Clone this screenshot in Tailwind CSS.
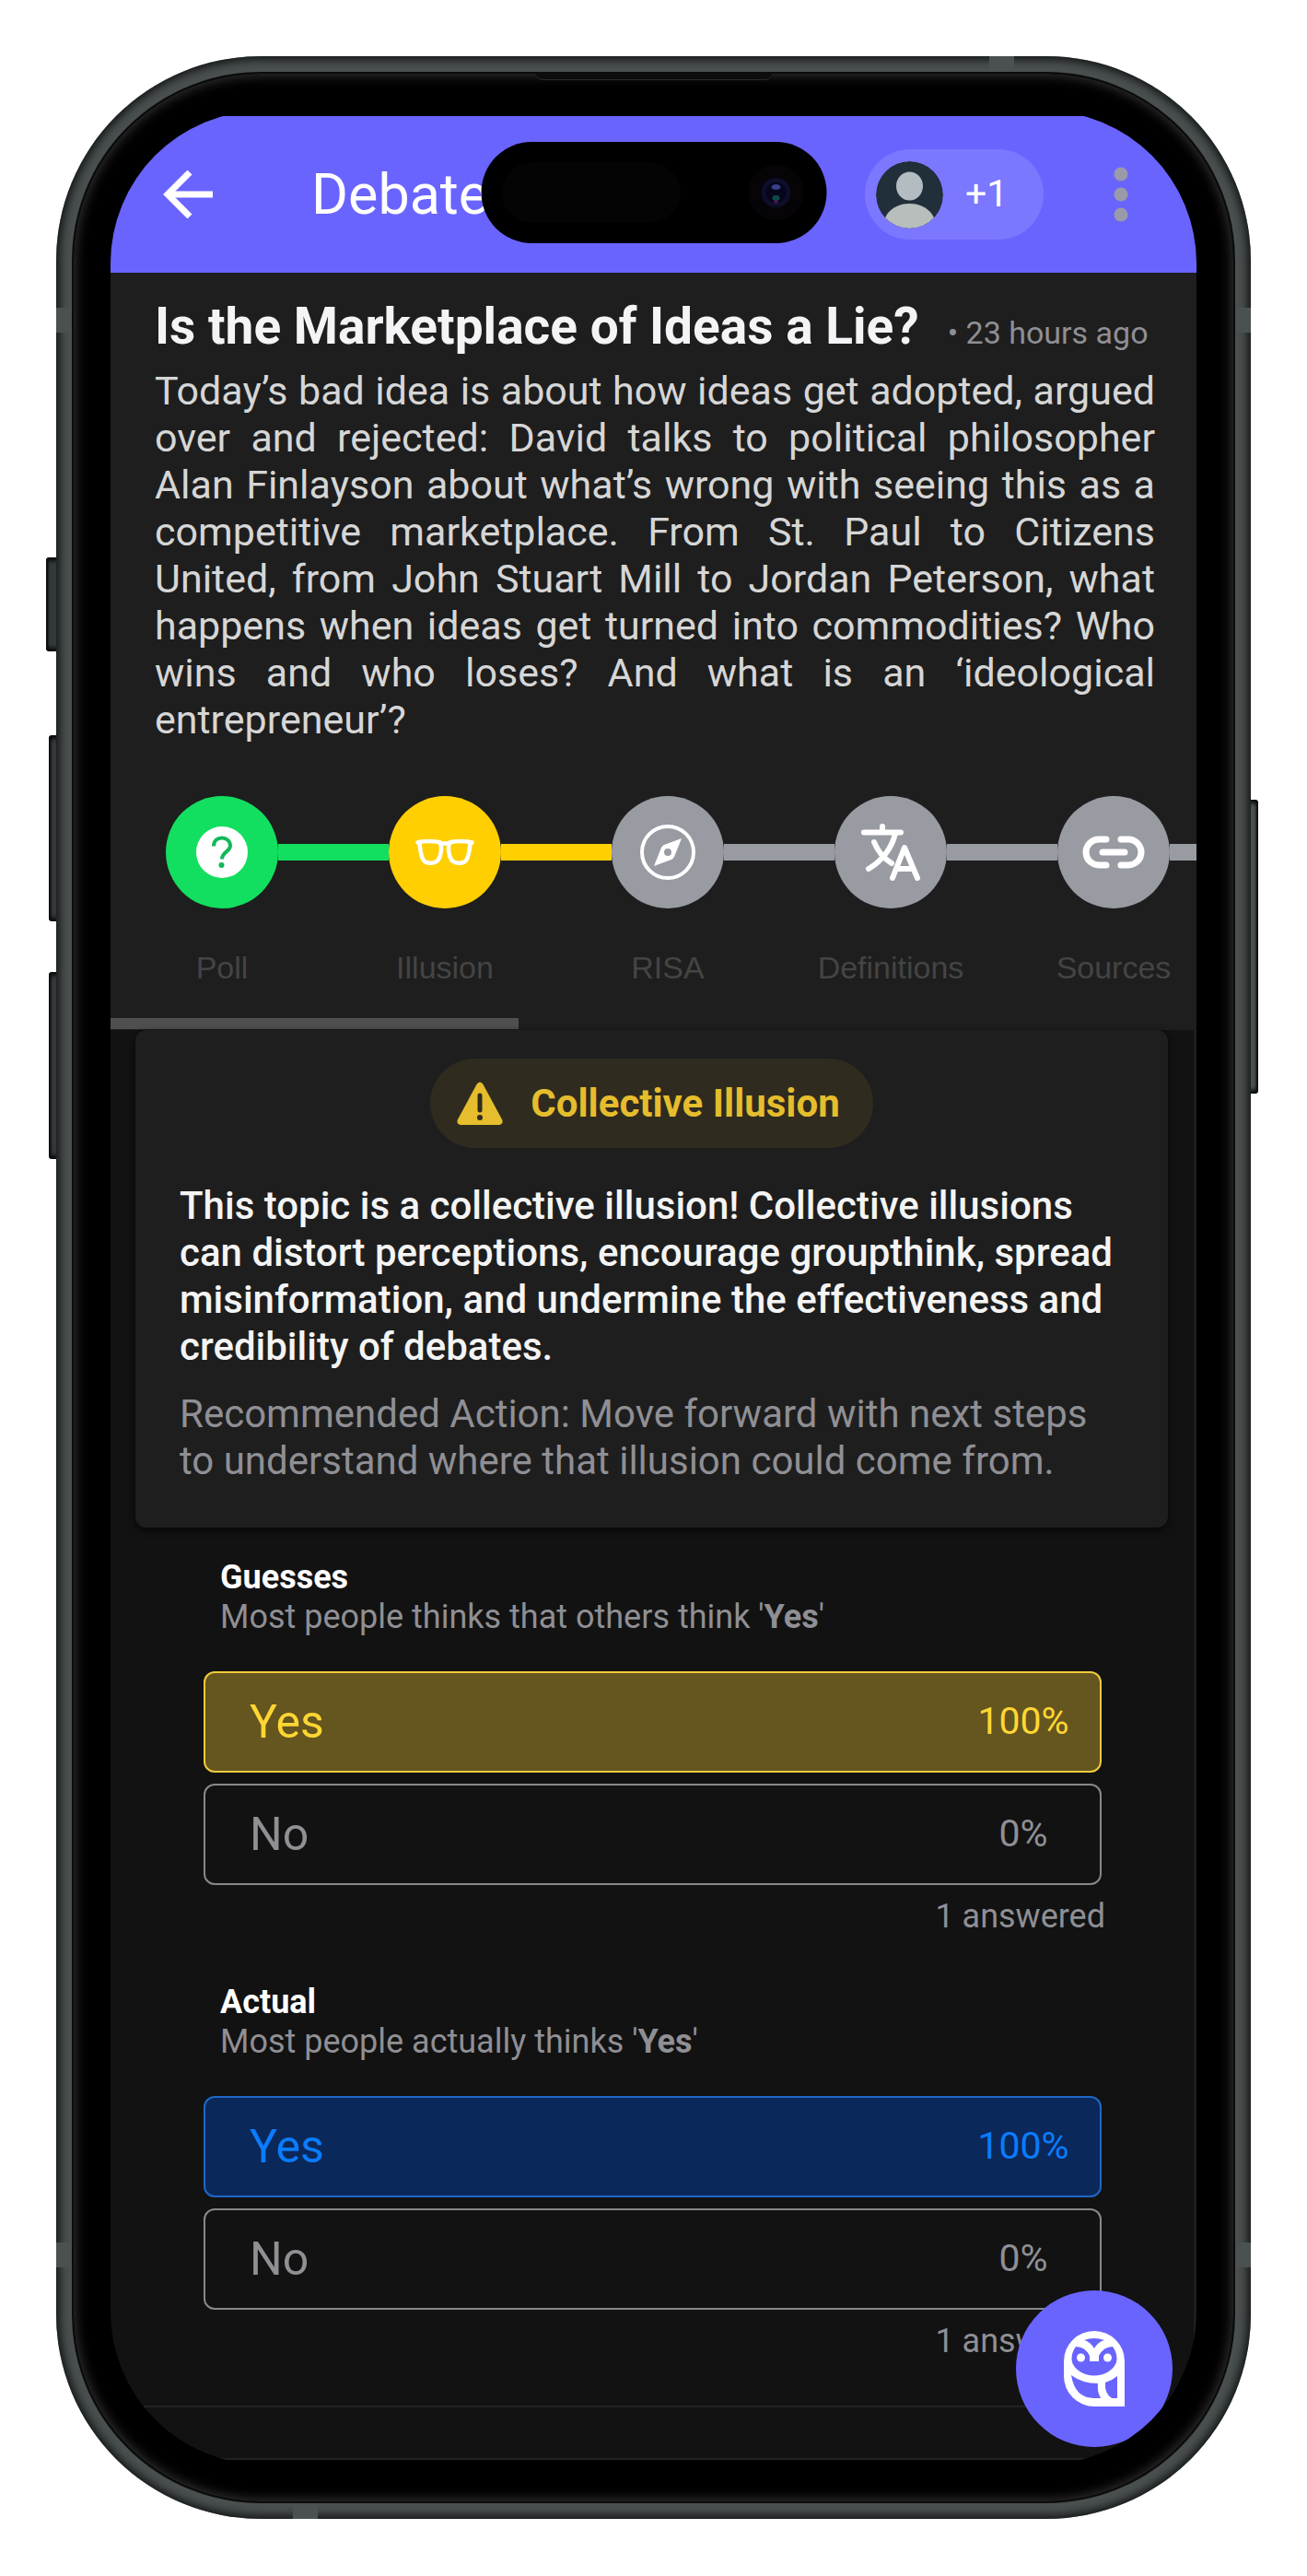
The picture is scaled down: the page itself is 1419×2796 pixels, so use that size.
<!DOCTYPE html>
<html lang="en">
<head>
<meta charset="utf-8">
<meta name="viewport" content="width=device-width, initial-scale=1">
<title>Debate</title>
<script src="https://cdn.jsdelivr.net/npm/@tailwindcss/browser@4"></script>
</head>
<body class="bg-white font-['Roboto',sans-serif]">
<div class="relative mx-[61px] my-[61px]">
  <!-- side buttons -->
  <span class="absolute -left-[11px] top-[544px] h-[102px] w-4 rounded-l bg-[#33383a] shadow-[inset_2px_0_2px_#0c0e0e,inset_0_4px_4px_#0c0e0e,inset_0_-4px_4px_#0c0e0e]"></span>
  <span class="absolute -left-2 top-[737px] h-[202px] w-4 rounded-l bg-[#33383a] shadow-[inset_2px_0_2px_#0c0e0e,inset_0_4px_4px_#0c0e0e,inset_0_-4px_4px_#0c0e0e]"></span>
  <span class="absolute -left-2 top-[994px] h-[203px] w-4 rounded-l bg-[#33383a] shadow-[inset_2px_0_2px_#0c0e0e,inset_0_4px_4px_#0c0e0e,inset_0_-4px_4px_#0c0e0e]"></span>
  <span class="absolute -right-2 top-[807px] h-[319px] w-4 rounded-r bg-[#4a4f50] shadow-[inset_-2px_0_2px_#0c0e0e,inset_0_4px_4px_#0c0e0e,inset_0_-4px_4px_#0c0e0e]"></span>

  <!-- metal frame -->
  <div class="relative overflow-hidden rounded-[222px] bg-[#4a4f50] p-[17px] shadow-[inset_0_0_10px_4px_#141717]">
    <span class="absolute right-[257px] top-0 h-[18px] w-[27px] bg-[#4b5051]"></span>
    <span class="absolute left-0 top-[273px] h-[27px] w-[18px] bg-[#4b5051]"></span>
    <span class="absolute right-0 top-[273px] h-[27px] w-[18px] bg-[#4b5051]"></span>
    <span class="absolute bottom-[273px] left-0 h-[27px] w-[18px] bg-[#4b5051]"></span>
    <span class="absolute bottom-[273px] right-0 h-[27px] w-[18px] bg-[#4b5051]"></span>
    <span class="absolute bottom-0 left-[257px] h-[18px] w-[27px] bg-[#4b5051]"></span>

    <!-- bezel -->
    <div class="relative rounded-[205px] border-2 border-[#0c0c0c] bg-black p-10 shadow-[inset_0_0_14px_1px_#3a3a3a]">
      <span class="absolute left-1/2 top-0 h-[7px] w-64 -translate-x-1/2 rounded-b-lg border-b border-[#2a2a2a] bg-[#0d0d0d]"></span>

      <!-- screen -->
      <div class="relative overflow-hidden rounded-[166px] bg-black pb-[5px] pt-[6px]">
        <header class="flex h-[170px] items-center bg-[#6a64ff]">
          <button type="button" aria-label="Back" class="ml-[57px] text-white">
            <svg class="h-[52px] w-[56px]" viewBox="0 0 56 52" fill="none" stroke="currentColor" stroke-width="7"><path d="M29 2 5 26 29 50"/><path d="M5 26H54"/></svg>
          </button>
          <h2 class="ml-[105px] text-[61px] leading-[72px] text-white">Debate</h2>
          <button type="button" class="ml-auto flex h-[98px] w-[194px] items-center gap-[24px] rounded-full bg-[#7c77ff] pl-3 text-[41px] text-white">
            <svg class="h-[73px] w-[73px] rounded-full" viewBox="0 0 73 73"><circle cx="36.500" cy="36.500" r="36.500" fill="#212f3a"/><ellipse cx="36.500" cy="27" rx="14.500" ry="15.500" fill="#b2bcc1"/><path d="M10 61.500C14 52 24 46 36.500 46S59 52 63 61.500A36.500 36.500 0 0 1 10 61.500Z" fill="#b8bebb"/></svg>
            <span>+1</span>
          </button>
          <button type="button" aria-label="More options" class="ml-[74px] mr-[72px]">
            <svg class="h-[60px] w-5" viewBox="0 0 20 60" fill="#9a9ba8"><circle cx="10" cy="8" r="7.500"/><circle cx="10" cy="30" r="7.500"/><circle cx="10" cy="52" r="7.500"/></svg>
          </button>
        </header>

        <!-- camera island -->
        <div class="absolute left-1/2 top-[34px] flex h-[110px] w-[375px] -translate-x-1/2 items-center justify-between rounded-full bg-black pl-[22px] pr-[25px]">
          <span class="h-[66px] w-[194px] rounded-full bg-[#040404]"></span>
          <svg class="h-[60px] w-[60px]" viewBox="0 0 60 60"><circle cx="30" cy="30" r="30" fill="#060407"/><circle cx="30" cy="30" r="16" fill="#0d0e2a"/><circle cx="30" cy="30" r="11" fill="#05061a"/><ellipse cx="30" cy="24" rx="5" ry="3" fill="#3b3f8c"/><ellipse cx="30" cy="36" rx="4" ry="3" fill="#0d4a4a"/><circle cx="30" cy="40" r="2" fill="#5a1450"/></svg>
        </div>

        <main class="bg-[#121212]">
          <section class="bg-[#1e1e1e] pt-7">
            <div class="pl-[48px] pr-[45px]">
              <div class="flex items-baseline gap-[31px] whitespace-nowrap">
                <h1 class="text-[55px] font-bold leading-[60px] text-[#f4f4f6]">Is the Marketplace of Ideas a Lie?</h1>
                <span class="text-[34px] leading-[40px] text-[#8f8f94]">• 23 hours ago</span>
              </div>
              <p class="mt-[15px] text-justify text-[43px] leading-[51px] text-[#d6d6d6]">Today’s bad idea is about how ideas get adopted, argued over and rejected: David talks to political philosopher Alan Finlayson about what’s wrong with seeing this as a competitive marketplace. From St. Paul to Citizens United, from John Stuart Mill to Jordan Peterson, what happens when ideas get turned into commodities? Who wins and who loses? And what is an ‘ideological entrepreneur’?</p>
            </div>

            <nav aria-label="Debate steps" class="mt-[57px] overflow-hidden">
              <ol class="flex font-['Liberation_Sans',sans-serif] text-[34px] leading-[40px] text-[#444444]">
                <li class="w-[242px] shrink-0">
                  <button type="button" class="flex w-full flex-col items-center gap-[44px]">
                    <span class="flex w-full items-center">
                      <span class="h-[18px] flex-1"></span>
                      <span class="flex size-[122px] items-center justify-center rounded-full bg-[#12df5f]">
                        <svg class="size-[56px]" viewBox="0 0 56 56"><circle cx="28" cy="28" r="28" fill="#fff"/><path d="M19 21.500C19 15.500 23 12.500 28 12.500S37 16 37 21C37 27.500 28 27.500 28 35.500" fill="none" stroke="#12b85a" stroke-width="4"/><circle cx="27.500" cy="42" r="3" fill="#12b85a"/></svg>
                      </span>
                      <span class="h-[18px] flex-1 bg-[#12df5f]"></span>
                    </span>
                    <span>Poll</span>
                  </button>
                </li>
                <li class="w-[242px] shrink-0">
                  <button type="button" class="flex w-full flex-col items-center gap-[44px]">
                    <span class="flex w-full items-center">
                      <span class="h-[18px] flex-1 bg-[#12df5f]"></span>
                      <span class="flex size-[122px] items-center justify-center rounded-full bg-[#ffcf02]">
                        <svg class="h-[28px] w-[64px]" viewBox="0 0 64 28" fill="none" stroke="#fff" stroke-width="4.500" stroke-linejoin="round" stroke-linecap="round"><path d="M2.500 3.500C9 1.500 20 1.500 27 3.500C29 9 28 17 25 22C22 26.500 12 27 9 23C5.500 18 5 9 4.500 4"/><path d="M61.500 3.500C55 1.500 44 1.500 37 3.500C35 9 36 17 39 22C42 26.500 52 27 55 23C58.500 18 59 9 59.500 4"/><path d="M27 4.500H37"/></svg>
                      </span>
                      <span class="h-[18px] flex-1 bg-[#ffcf02]"></span>
                    </span>
                    <span>Illusion</span>
                  </button>
                </li>
                <li class="w-[242px] shrink-0">
                  <button type="button" class="flex w-full flex-col items-center gap-[44px]">
                    <span class="flex w-full items-center">
                      <span class="h-[18px] flex-1 bg-[#ffcf02]"></span>
                      <span class="flex size-[122px] items-center justify-center rounded-full bg-[#999ba3]">
                        <svg class="size-[60px]" viewBox="0 0 60 60"><circle cx="30" cy="30" r="28" fill="none" stroke="#fff" stroke-width="4"/><path fill="#fff" fill-rule="evenodd" d="M45 15 37 35Q36 37 34 38L15 45 23 25Q24 23 26 22ZM30 26A4 4 0 1 0 30 34A4 4 0 1 0 30 26Z"/></svg>
                      </span>
                      <span class="h-[18px] flex-1 bg-[#999ba3]"></span>
                    </span>
                    <span>RISA</span>
                  </button>
                </li>
                <li class="w-[242px] shrink-0">
                  <button type="button" class="flex w-full flex-col items-center gap-[44px]">
                    <span class="flex w-full items-center">
                      <span class="h-[18px] flex-1 bg-[#999ba3]"></span>
                      <span class="flex size-[122px] items-center justify-center rounded-full bg-[#999ba3]">
                        <svg class="size-[64px]" viewBox="0 0 64 64" fill="none" stroke="#fff" stroke-width="6" stroke-linecap="round" stroke-linejoin="round"><path d="M3 10.500H43M23 4V10"/><path d="M37 11C34 27 22 42 8 50"/><path d="M14 21C18 31 25 39 33 44"/><path d="M34 60 47 27 61 60M39 50H56"/></svg>
                      </span>
                      <span class="h-[18px] flex-1 bg-[#999ba3]"></span>
                    </span>
                    <span>Definitions</span>
                  </button>
                </li>
                <li class="w-[242px] shrink-0">
                  <button type="button" class="flex w-full flex-col items-center gap-[44px]">
                    <span class="flex w-full items-center">
                      <span class="h-[18px] flex-1 bg-[#999ba3]"></span>
                      <span class="flex size-[122px] items-center justify-center rounded-full bg-[#999ba3]">
                        <svg class="h-[36px] w-[68px]" viewBox="0 0 68 36" fill="none" stroke="#fff" stroke-width="7" stroke-linecap="round"><path d="M26 4H18A14 14 0 0 0 18 32H26"/><path d="M42 4H50A14 14 0 0 1 50 32H42"/><path d="M22 18H46"/></svg>
                      </span>
                      <span class="h-[18px] flex-1 bg-[#999ba3]"></span>
                    </span>
                    <span>Sources</span>
                  </button>
                </li>
              </ol>
              <div class="mt-[35px] h-[13px]"><div class="h-3 w-[443px] bg-[#4f4f4f]"></div></div>
            </nav>
          </section>

          <div class="border-r-3 border-[#1f1f23]">
            <section class="ml-[27px] mr-[28px] rounded-xl bg-[#1e1e1e] px-[48px] pb-[47px] pt-[31px] shadow-[0_3px_8px_#000000b0]">
              <div class="mx-auto flex h-[97px] w-fit items-center gap-[30px] rounded-full bg-[#2f2b1f] pl-[29px] pr-[36px] text-[#e5bd2d]">
                <svg class="h-[48px] w-[50px]" viewBox="0 0 50 48"><path d="M21.500 3Q25 -2 28.500 3L49 41Q51 46 46 47H4Q-1 46 1 41Z" fill="currentColor"/><path d="M25 15V31" stroke="#2f2b1f" stroke-width="5" stroke-linecap="round"/><circle cx="25" cy="39" r="3" fill="#2f2b1f"/></svg>
                <h2 class="text-[42px] font-bold leading-[51px]">Collective Illusion</h2>
              </div>
              <p class="mt-[37px] text-[42px] font-medium leading-[51px] text-[#f4f4f4]">This topic is a collective illusion! Collective illusions can distort perceptions, encourage groupthink, spread misinformation, and undermine the effectiveness and credibility of debates.</p>
              <p class="mt-[22px] text-[42px] leading-[51px] text-[#8f8f94]">Recommended Action: Move forward with next steps to understand where that illusion could come from.</p>
            </section>

            <section class="ml-[101px] mr-[100px] pt-[33px]">
              <h3 class="pl-[18px] text-[36px] font-bold leading-[42px] text-white">Guesses</h3>
              <p class="pl-[18px] text-[36px] leading-[44px] text-[#8f8f94]">Most people thinks that others think '<b>Yes</b>'</p>
              <ul class="mt-[37px] flex flex-col gap-3">
                <li class="flex h-[110px] items-center justify-between rounded-xl border-2 border-[#f0ca3c] bg-[#65551e] pl-[48px] text-[#ffd633]"><span class="text-[50px]">Yes</span><span class="w-[166px] text-center text-[41px]">100%</span></li>
                <li class="flex h-[110px] items-center justify-between rounded-xl border-2 border-[#87878c] pl-[48px] text-[#8f8f94]"><span class="text-[50px]">No</span><span class="w-[166px] text-center text-[41px]">0%</span></li>
              </ul>
              <p class="-mr-1 mt-3 text-right text-[36px] leading-[44px] text-[#8f8f94]">1 answered</p>
            </section>

            <section class="ml-[101px] mr-[100px] pt-[50px]">
              <h3 class="pl-[18px] text-[36px] font-bold leading-[42px] text-white">Actual</h3>
              <p class="pl-[18px] text-[36px] leading-[44px] text-[#8f8f94]">Most people actually thinks '<b>Yes</b>'</p>
              <ul class="mt-[37px] flex flex-col gap-3">
                <li class="flex h-[110px] items-center justify-between rounded-xl border-2 border-[#1e68c8] bg-[#0b285a] pl-[48px] text-[#0a7cff]"><span class="text-[50px]">Yes</span><span class="w-[166px] text-center text-[41px]">100%</span></li>
                <li class="flex h-[110px] items-center justify-between rounded-xl border-2 border-[#87878c] pl-[48px] text-[#8f8f94]"><span class="text-[50px]">No</span><span class="w-[166px] text-center text-[41px]">0%</span></li>
              </ul>
              <p class="-mr-1 mt-3 text-right text-[36px] leading-[44px] text-[#8f8f94]">1 answered</p>
            </section>
            <div class="mt-[48px] h-[59px] border-y-2 border-[#222222]"></div>
          </div>
        </main>

        <button type="button" aria-label="Open assistant" class="absolute bottom-[19px] right-[26px] flex size-[170px] items-center justify-center rounded-full bg-[#6a64ff]">
          <svg class="h-[82px] w-[66px]" viewBox="0 0 66 82" fill="#6a64ff"><path fill="#fff" d="M66 82H33A33 33 0 0 1 0 49V33A33 33 0 0 1 66 33Z"/><path d="M22 10Q33 6 44 10Q37 12 33 19Q29 12 22 10Z"/><path d="M13 17Q23 17 28 27V33H38V27Q43 17 53 17Q59 25 57 34A25 20 0 0 1 9 34Q7 25 13 17Z"/><path d="M8 48Q20 57 37 57Q36 66 40 73H33Q12 73 8 48Z"/><path d="M45 56Q52 54 58 49V73H52Q44 68 45 56Z"/><circle cx="18.500" cy="29" r="4.500" fill="#fff"/><circle cx="47.500" cy="29" r="4.500" fill="#fff"/></svg>
        </button>
      </div>
    </div>
  </div>
</div>
</body>
</html>
